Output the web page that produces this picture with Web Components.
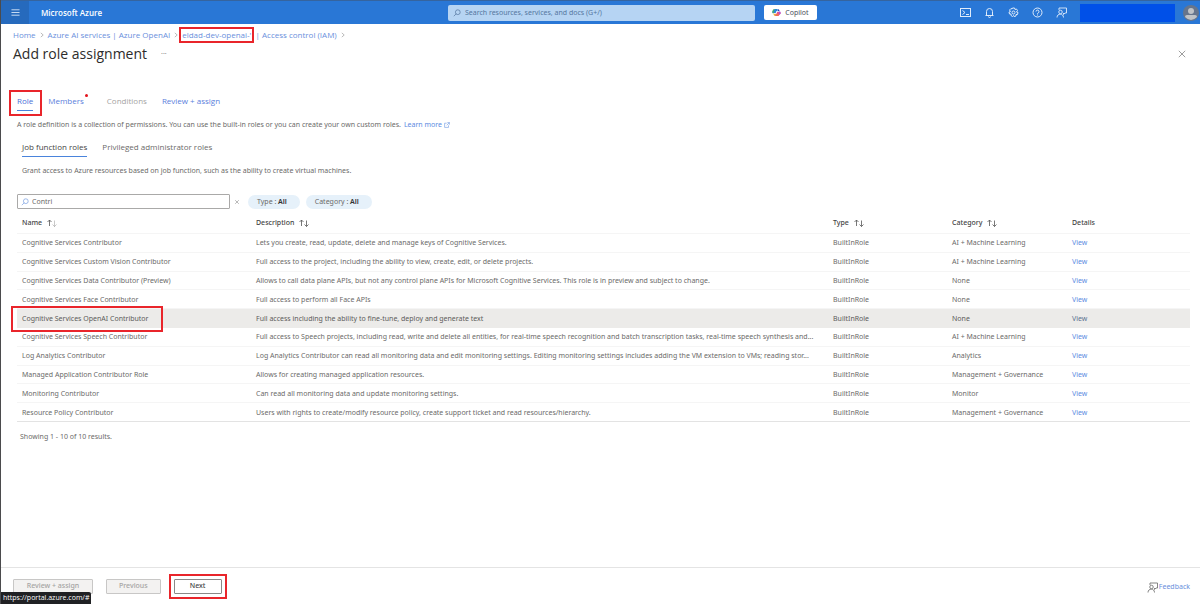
<!DOCTYPE html>
<html lang="en">
<head>
<meta charset="utf-8">
<title>Add role assignment - Microsoft Azure</title>
<style>
html, body { margin: 0; height: 100%; }
body { font-family: "Noto Sans", "Open Sans", sans-serif; font-size: 7px; line-height: 10px; color: #6b6a69; background: #fff; --wide: "Open Sans", "Noto Sans", sans-serif; }
</style>
</head>
<body>
<azure-portal></azure-portal>
<script>
const icon = (box, body, size = 11) => `<svg viewBox="0 0 ${box} ${box}" width="${size}" height="${size}" fill="none" stroke="currentColor" aria-hidden="true">${body}</svg>`;
const ICONS = {
  shell: icon(22, '<rect x="1" y="3" width="20" height="16" stroke-width="2"/><path d="M5 7l5 4-5 4M12 15h6" stroke-width="2"/>'),
  bell: icon(22, '<path d="M5 17V9a6 6 0 0 1 12 0v8zM3 17h16M9 19a2 2 0 0 0 4 0" stroke-width="2"/>'),
  gear: icon(22, '<path d="M9 2h4l1 3 3-1 2 3-2 3 3 1-1 4-3 0 0 3-4 1-1-2-2 2-3-2 0-3-3 0-1-4 3-1-2-3 3-3 2 1z" stroke-width="2" stroke-linejoin="round"/><circle cx="11" cy="11" r="3" stroke-width="2"/>'),
  help: icon(22, '<circle cx="11" cy="11" r="9" stroke-width="2"/><path d="M8 9a3 3 0 1 1 4 3q-1 .6-1 2M11 15v2" stroke-width="2"/>'),
  feedback: icon(22, '<path d="M6 6V2h15v10h-3l-3 3v-3" stroke-width="1.8"/><circle cx="9" cy="10" r="3.5" stroke-width="1.8"/><path d="M2 21c0-9 13-9 13 0" stroke-width="1.8"/>'),
  search: icon(20, '<circle cx="12" cy="8" r="6" stroke-width="1.8"/><path d="M8 12l-6 6" stroke-width="1.8"/>', 8),
  close: icon(20, '<path d="M2 2l16 16M18 2L2 18" stroke-width="1.8"/>', 8),
  chevron: icon(20, '<path d="M6 3l8 7-8 7" stroke-width="2"/>', 6),
  external: icon(20, '<path d="M9 4H2v14h13v-7M11 2h7v7M18 2l-9 9" stroke-width="1.8"/>', 6)
};
const define = (name, html) => customElements.define(name, class extends HTMLElement {
  constructor() {
    super();
    const t = document.createElement('template');
    t.innerHTML = '<style>*{box-sizing:border-box}svg{display:block;flex:none}a{text-decoration:none;color:inherit}button{font:inherit;color:inherit;border:0;background:none;padding:0;margin:0}</style>' + html;
    this.attachShadow({ mode: 'open' }).append(t.content.cloneNode(true));
  }
});

define('call-out', `
<style>
:host { display: inline-block; position: relative; }
i { position: absolute; inset: var(--callout-inset, -4px); border: 2px solid #e9252b; pointer-events: none; z-index: 2; }
</style><slot></slot><i></i>`);

define('top-bar', `
<style>
:host { display: block; background: #2977d6; color: #fff; border-top: 1px solid #35649f; }
header { display: flex; align-items: center; height: 23px; }
.menu { width: 28px; height: 23px; background: #266abd; display: grid; place-items: center; color: #d6e5f8; }
.side { flex: 7 1 0; display: flex; align-items: center; }
.brand { font-size: 8px; font-weight: 600; margin-left: 12px; font-family: var(--wide); }
.search { width: 26%; max-width: 307px; height: 16px; display: flex; align-items: center; gap: 4px; padding: 0 5px; background: #b6d4f3; border-radius: 2px; color: #55779f; margin-right: 9px; }
input { flex: 1; min-width: 0; border: 0; padding: 0; background: none; font: inherit; outline: 0; color: inherit; }
input::placeholder { color: #55779f; opacity: 1; }
.copilot { width: 53px; height: 15px; background: #fff; color: #494f59; border-radius: 2px; display: flex; align-items: center; justify-content: center; gap: 4px; }
.tools { flex-grow: 6; justify-content: flex-end; gap: 13px; color: #dfebfa; }
.tools button { width: 11px; height: 11px; }
.account { width: 95px; height: 18px; background: #0050e8; }
.avatar { margin-left: -5px; margin-right: 1px; }
</style>
<header>
  <div class="side"><button class="menu" aria-label="Menu">${icon(20, '<path d="M1 4h18M1 10h18M1 16h18" stroke-width="2"/>', 9)}</button><a class="brand" href="#">Microsoft Azure</a></div>
  <label class="search">${ICONS.search}<input type="text" aria-label="Search" placeholder="Search resources, services, and docs (G+/)"></label>
  <button class="copilot"><svg viewBox="0 0 20 20" width="9" height="9"><path d="M6 2h7l-3 9H4c-3 0-4-1-3-4z" fill="#2a86dd"/><path d="M1 7q0-5 5-5L3 13q-3 0-2-6z" fill="#4fae68"/><path d="M13 2q3 0 4 5h-5l2-5z" fill="#2646b5"/><path d="M14 18H7l3-9h6c3 0 4 1 3 4z" fill="#e54f91"/><path d="M7 18q-3 0-4-5h5l2-1-3 6z" fill="#eeb03b"/><path d="M14 18H7l2-5h7z" fill="#f16e55"/><path d="M16 7q4 0 3 5l-3 3z" fill="#a956de"/><path d="M9 7h3l-2 6H8z" fill="#fff"/></svg><span>Copilot</span></button>
  <div class="side tools">
    <button aria-label="Cloud Shell">${ICONS.shell}</button><button aria-label="Notifications">${ICONS.bell}</button><button aria-label="Settings">${ICONS.gear}</button><button aria-label="Help">${ICONS.help}</button><button aria-label="Feedback">${ICONS.feedback}</button>
    <span class="account"></span>
    <svg class="avatar" viewBox="0 0 16 16" width="16" height="16"><circle cx="8" cy="8" r="8" fill="#66758c"/><circle cx="8" cy="6" r="3" fill="#bfc3c7"/><path d="M2 12q0-2 2-2h8q2 0 2 2-6 6-12 0z" fill="#bfc3c7"/></svg>
  </div>
</header>`);

define('bread-crumbs', `
<style>
:host { display: block; font-family: var(--wide); }
nav { display: flex; align-items: center; gap: 3px; font-size: 8px; line-height: 12px; color: #6a8fdc; white-space: nowrap; }
svg { color: #8d8d8d; }
call-out { --callout-inset: -2px -3px; }
</style>
<nav aria-label="Breadcrumb"><a href="#">Home</a>${ICONS.chevron}<a href="#">Azure AI services | Azure OpenAI</a>${ICONS.chevron}<span><call-out><a href="#">eldad-dev-openai-'</a></call-out><a href="#">&nbsp; | Access control (IAM)</a></span>${ICONS.chevron}</nav>`);

define('page-title', `
<style>
:host { display: flex; align-items: center; }
h1 { margin: 0; font-size: 14px; line-height: 20px; font-weight: 400; color: #2d2c2b; font-family: var(--wide); }
.more { margin-left: 14px; color: #8a8a8a; }
.close { margin-left: auto; color: #777; }
</style>
<h1>Add role assignment</h1><button class="more" aria-label="More">···</button><button class="close" aria-label="Close">${ICONS.close}</button>`);

define('step-tabs', `
<style>
:host { display: flex; align-items: flex-start; font-size: 8px; line-height: 12px; color: #5b80dc; font-family: var(--wide); }
a { padding-bottom: 3px; }
.on { display: block; color: #4a6fd8; border-bottom: 1px solid #4a84dc; }
call-out { --callout-inset: -5px -9px -5px -8px; }
.members { margin-left: 15px; display: flex; }
.members::after { content: ""; width: 3px; height: 3px; border-radius: 2px; background: #e3131b; margin: -1px 0 0 1px; }
.off { color: #a5a4a3; margin: 0 15px 0 19px; }
</style>
<call-out><a class="on" href="#">Role</a></call-out><a class="members" href="#">Members</a><span class="off">Conditions</span><a href="#">Review + assign</a>`);

define('scope-tabs', `
<style>
:host { display: flex; gap: 15px; font-size: 8px; line-height: 12px; font-family: var(--wide); }
.on { color: #444; border-bottom: 1px solid #4a84dc; padding-bottom: 3px; font-weight: 500; }
</style>
<a class="on" href="#">Job function roles</a><a href="#">Privileged administrator roles</a>`);

define('filter-pill', `
<style>
:host { display: block; }
button { height: 14px; padding: 0 13px 0 9px; border-radius: 7px; background: #e6f1fa; display: block; }
::slotted(b) { color: #333; font-weight: 600; }
</style><button><slot></slot></button>`);

define('role-filters', `
<style>
:host { display: flex; align-items: center; }
.box { width: 213px; height: 15px; border: 1px solid #aaa9a8; border-radius: 1px; display: flex; align-items: center; gap: 3px; padding: 0 3px; color: #7ba0e0; }
input { flex: 1; min-width: 0; border: 0; padding: 0; outline: 0; font: inherit; color: #6b6a69; background: none; }
.clear { margin: 0 8px 0 4px; color: #8a8a8a; }
.pills { display: flex; gap: 6px; padding-top: 1px; }
</style>
<label class="box">${ICONS.search}<input type="text" aria-label="Search by role name" value="Contri"></label>
<button class="clear" aria-label="Clear">${icon(20, '<path d="M4 4l12 12M16 4L4 16" stroke-width="2"/>', 6)}</button>
<div class="pills"><filter-pill>Type : <b>All</b></filter-pill><filter-pill>Category : <b>All</b></filter-pill></div>`);

const ML = 'AI + Machine Learning';
const ROLES = [
  ['Cognitive Services Contributor', 'Lets you create, read, update, delete and manage keys of Cognitive Services.', ML],
  ['Cognitive Services Custom Vision Contributor', 'Full access to the project, including the ability to view, create, edit, or delete projects.', ML],
  ['Cognitive Services Data Contributor (Preview)', 'Allows to call data plane APIs, but not any control plane APIs for Microsoft Cognitive Services. This role is in preview and subject to change.', 'None'],
  ['Cognitive Services Face Contributor', 'Full access to perform all Face APIs', 'None'],
  ['Cognitive Services OpenAI Contributor', 'Full access including the ability to fine-tune, deploy and generate text', 'None'],
  ['Cognitive Services Speech Contributor', 'Full access to Speech projects, including read, write and delete all entities, for real-time speech recognition and batch transcription tasks, real-time speech synthesis and...', ML],
  ['Log Analytics Contributor', 'Log Analytics Contributor can read all monitoring data and edit monitoring settings. Editing monitoring settings includes adding the VM extension to VMs; reading stor...', 'Analytics'],
  ['Managed Application Contributor Role', 'Allows for creating managed application resources.', 'Management + Governance'],
  ['Monitoring Contributor', 'Can read all monitoring data and update monitoring settings.', 'Monitor'],
  ['Resource Policy Contributor', 'Users with rights to create/modify resource policy, create support ticket and read resources/hierarchy.', 'Management + Governance']
];
const arrows = (second) => `<svg viewBox="0 0 20 16" width="10" height="8" fill="none" stroke="#555" stroke-width="1.6" aria-hidden="true"><path d="M5 14V2M1 6l4-4 4 4"/><path d="M15 3v12M11 11l4 4 4-4" opacity="${second}"/></svg>`;
define('role-table', `
<style>
:host { display: block; }
table { width: 100%; height: 209px; table-layout: fixed; border-collapse: separate; border-spacing: 0; }
th, td { padding: 0 5px; text-align: left; white-space: nowrap; border-bottom: 1px solid #f5f5f5; }
td { overflow: hidden; text-overflow: ellipsis; padding-top: 1px; }
td:first-child { overflow: visible; }
th { height: 21px; font-size: 7px; font-weight: 500; color: #444; }
th div { display: flex; align-items: center; gap: 5px; }
.name { width: 234px; } .type { width: 119px; } .category { width: 120px; } .details { width: 123px; }
td a { color: #5c8bdf; }
.picked td { background: #ecebe9; color: #5c5b5a; border-color: #ecebe9; }
.picked td a { color: #5b7290; }
tbody tr:last-child td { border-bottom: 1px solid #e3e3e3; }
call-out { --callout-inset: -8px -15px -8px -11px; }
</style>
<table><thead><tr><th class="name"><div>Name ${arrows(.4)}</div></th><th><div>Description ${arrows(1)}</div></th><th class="type"><div>Type ${arrows(1)}</div></th><th class="category"><div>Category ${arrows(1)}</div></th><th class="details">Details</th></tr></thead>
<tbody>${ROLES.map(([n, d, c], i) => `<tr${i === 4 ? ' class="picked"' : ''}><td>${i === 4 ? `<call-out>${n}</call-out>` : n}</td><td>${d}</td><td>BuiltInRole</td><td>${c}</td><td><a href="#">View</a></td></tr>`).join('')}</tbody></table>`);

define('wizard-footer', `
<style>
:host { display: flex; align-items: center; padding: 0 10px 0 12px; height: 37px; border-top: 1px solid #e4e4e4; }
button.b { height: 15px; border: 1px solid #8a8988; border-radius: 1px; padding: 0 12px; margin-right: 13px; background: #fff; color: #444; font-weight: 500; }
button.b:disabled { background: #f3f2f1; border-color: #c8c7c6; color: #a5a4a3; }
button.b:first-of-type { min-width: 80px; }
button.b.n { min-width: 48px; margin: 0; display: block; }
.fb { margin-left: auto; display: flex; align-items: center; gap: 1px; color: #777; padding-top: 2px; }
.fb span { color: #6a8fdc; }
call-out { --callout-inset: -5px; }
</style>
<button class="b" disabled>Review + assign</button><button class="b" disabled>Previous</button><call-out><button class="b n">Next</button></call-out>
<a class="fb" href="#">${ICONS.feedback}<span>Feedback</span></a>`);

define('azure-portal', `
<style>
:host { display: flex; flex-direction: column; min-height: 100vh; box-sizing: border-box; border-left: 1px solid #4b4b4d; position: relative; }
main { flex: 1; }
bread-crumbs { padding: 5px 12px 0; }
page-title { padding: 3px 14px 0 12px; }
step-tabs { padding: 31px 16px 0; }
.note { margin: 9px 16px 0; display: flex; align-items: center; }
.note a { color: #5c8bdf; display: flex; align-items: center; gap: 2px; margin-left: 3px; }
scope-tabs { padding: 11px 21px 0; }
.grant { margin: 9px 21px 0; }
role-filters { padding: 18px 16px 0; }
role-table { margin: 4px 10px 0 16px; }
.count { margin: 10px 19px; }
.status { position: absolute; left: 0; bottom: 0; background: #202124; color: #fff; padding: 0 2px; line-height: 12px; border-radius: 0 2px 0 0; z-index: 3; font-family: var(--wide); }
p { margin: 0; }
</style>
<top-bar></top-bar>
<main>
<bread-crumbs></bread-crumbs>
<page-title></page-title>
<step-tabs></step-tabs>
<p class="note">A role definition is a collection of permissions. You can use the built-in roles or you can create your own custom roles.<a href="#">Learn more ${ICONS.external}</a></p>
<scope-tabs></scope-tabs>
<p class="grant">Grant access to Azure resources based on job function, such as the ability to create virtual machines.</p>
<role-filters></role-filters>
<role-table></role-table>
<p class="count">Showing 1 - 10 of 10 results.</p>
</main>
<wizard-footer></wizard-footer>
<div class="status">https://portal.azure.com/#</div>`);
</script>
</body>
</html>
